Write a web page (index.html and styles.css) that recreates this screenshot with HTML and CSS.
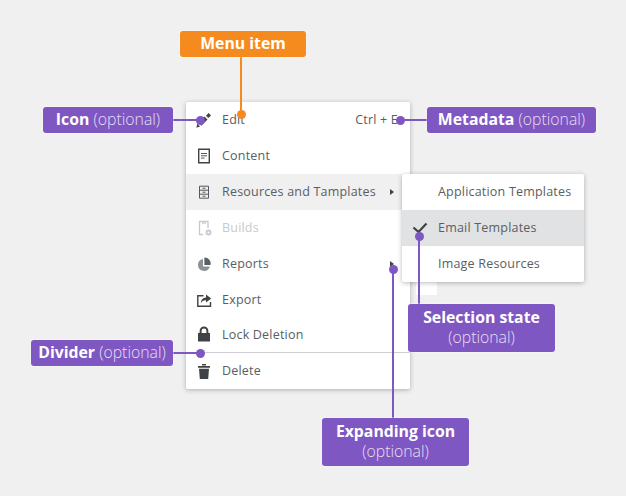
FILE: index.html
```html
<!DOCTYPE html>
<html lang="en">
<head>
<meta charset="utf-8">
<title>Menu anatomy</title>
<link rel="stylesheet" href="styles.css">
</head>
<body>
<main class="stage">
  <div class="patch"></div>
  <nav class="menu main-menu">
    <div class="row">
      <svg class="icon" viewBox="0 0 16 16"><path class="ink" d="M.3 15.700l1-3.900 2.800 2.800z"/><path class="ink" d="M2.200 10.800l6.300-6.300 3 3-6.300 6.300z"/><path class="ink" d="M10 3.800l1.700-1.700 1-1 2.300 2.300-1 1-1.700 1.700z"/></svg>
      <span class="label">Edit</span><span class="meta">Ctrl + E</span>
    </div>
    <div class="row">
      <svg class="icon" viewBox="0 0 16 16"><path class="line" d="M2.700 1.200h10.600v13.600H2.700z"/><path class="thin" d="M5 5.500h6M5 7.800h6M5 10.100h3.500"/></svg>
      <span class="label">Content</span>
    </div>
    <div class="row hover">
      <svg class="icon" viewBox="0 0 16 16"><path class="thin" d="M3.500 2.200h9v12h-9zM3.500 6.200h9M3.500 10.200h9M6.500 4.200h3M6.500 8.200h3M6.500 12.200h3"/></svg>
      <span class="label">Resources and Tamplates</span><span class="caret"></span>
    </div>
    <div class="row disabled">
      <svg class="icon" viewBox="0 0 16 16"><path class="faint" d="M7 14.500H3.500V1.500h8.500V8"/><path class="faint" d="M6 3h4"/><circle class="faint-fill" cx="12.500" cy="12.500" r="3"/><circle cx="12.500" cy="12.500" r="1.100" fill="#fff"/></svg>
      <span class="label">Builds</span>
    </div>
    <div class="row">
      <svg class="icon" viewBox="0 0 16 16"><path fill="#8e9193" d="M7 3a6 6 0 1 0 6.800 7.500H7z"/><path fill="#5b5f62" d="M8.400 1.500a6 6 0 0 1 6.100 7.500H8.400z"/></svg>
      <span class="label">Reports</span><span class="caret"></span>
    </div>
    <div class="row">
      <svg class="icon" viewBox="0 0 16 16"><path class="line" d="M7.500 3.800H1.800v10.400h12.700V10"/><path class="ink" d="M10 2.500l5.200 4-5.200 4V8.300C7.500 8.200 5.800 9.300 4.800 11.500c0-3.500 1.800-5.700 5.200-6z"/></svg>
      <span class="label">Export</span>
    </div>
    <div class="row lock-row">
      <svg class="icon" viewBox="0 0 16 16"><path class="ink" d="M2 7h12v8.500H2z"/><path class="bold-line" d="M4.600 7.500V4.800a3.400 3.400 0 0 1 6.800 0v2.700"/></svg>
      <span class="label">Lock Deletion</span>
    </div>
    <div class="row">
      <svg class="icon" viewBox="0 0 16 16"><path class="ink" d="M2 3h12v1.700H2zM6 1h4v1.500H6zM3 5.700h10l-.8 10.300H3.800z"/></svg>
      <span class="label">Delete</span>
    </div>
  </nav>
  <nav class="menu sub-menu">
    <div class="row sub-row"><span class="tick"></span><span class="label">Application Templates</span></div>
    <div class="row sub-row selected">
      <span class="tick"><svg class="check" viewBox="0 0 16 12"><path d="M1.500 5.500l5 4.500 8-8.500"/></svg></span>
      <span class="label">Email Templates</span>
    </div>
    <div class="row sub-row"><span class="tick"></span><span class="label">Image Resources</span></div>
  </nav>

  <div class="wire wire-menu"></div>
  <div class="wire wire-icon"></div>
  <div class="wire wire-meta"></div>
  <div class="wire wire-divider"></div>
  <div class="wire wire-select"></div>
  <div class="wire wire-expand"></div>

  <span class="dot dot-menu"></span>
  <span class="dot dot-icon"></span>
  <span class="dot dot-meta"></span>
  <span class="dot dot-divider"></span>
  <span class="dot dot-select"></span>
  <span class="dot dot-expand"></span>

  <div class="tag tag-menu"><b>Menu item</b></div>
  <div class="tag tag-icon"><b>Icon</b> (optional)</div>
  <div class="tag tag-meta"><b>Metadata</b> (optional)</div>
  <div class="tag tag-divider"><b>Divider</b> (optional)</div>
  <div class="tag tag-select"><b>Selection state</b><span>(optional)</span></div>
  <div class="tag tag-expand"><b>Expanding icon</b><span>(optional)</span></div>
</main>
</body>
</html>
```
FILE: styles.css
```css
* { box-sizing: border-box; }
html, body { margin: 0; }
body {
  background: #f0f0f0;
  font-family: "Open Sans", "Noto Sans", sans-serif;
  color: #5a5e61;
}
.stage { position: relative; width: 626px; height: 496px; overflow: hidden; }
.patch { position: absolute; left: 416px; top: 270px; width: 21px; height: 25px; background: #fff; }
.menu {
  position: absolute;
  background: #fff;
  border-radius: 2px;
  box-shadow: 0 1px 5px rgba(0, 0, 0, .28);
  display: flex;
  flex-direction: column;
}
.main-menu { left: 186px; top: 102px; width: 224px; height: 287px; }
.sub-menu { left: 402px; top: 174px; width: 182px; height: 108px; }
.row {
  height: 36px;
  flex: none;
  display: flex;
  align-items: center;
  padding: 0 13px 1px 10px;
  font-size: 12.5px;
  letter-spacing: .2px;
  white-space: nowrap;
}
.icon { width: 16px; height: 16px; flex: none; margin-right: 10px; }
.label { flex: 1; }
.meta { margin-right: -1px; }
.hover { background: #f0f0f0; }
.selected { background: #e1e2e3; }
.disabled { color: #c8cacb; }
.lock-row { height: 35px; border-bottom: 1px solid #cfcdd3; padding-bottom: 2px; }
.caret {
  width: 0; height: 0;
  margin-right: 3px;
  border-left: 4px solid #3f4346;
  border-top: 3px solid transparent;
  border-bottom: 3px solid transparent;
}
.sub-row { padding-left: 10px; padding-right: 8px; }
.tick { width: 26px; flex: none; display: flex; }
.check { width: 16px; height: 12px; margin-top: 1px; fill: none; stroke: #3f4346; stroke-width: 2.2; }
.ink { fill: #3f4346; }
.line { fill: none; stroke: #3f4346; stroke-width: 1.400; }
.thin { fill: none; stroke: #55595c; stroke-width: 1; }
.bold-line { fill: none; stroke: #3f4346; stroke-width: 2; }
.faint { fill: none; stroke: #c8cacb; stroke-width: 1.300; }
.faint-fill { fill: #c8cacb; }

.wire { position: absolute; }
.wire-menu { left: 240px; top: 57px; width: 2px; height: 57px; background: #f58a1f; }
.wire-icon { left: 173px; top: 119px; width: 27px; height: 2px; background: #7f57c2; }
.wire-meta { left: 400px; top: 119px; width: 27px; height: 2px; background: #7f57c2; }
.wire-divider { left: 173px; top: 352px; width: 27px; height: 2px; background: #7f57c2; }
.wire-select { left: 418px; top: 236px; width: 2px; height: 68px; background: #7f57c2; }
.wire-expand { left: 392px; top: 269px; width: 2px; height: 149px; background: #7f57c2; }

.dot { position: absolute; width: 9px; height: 9px; border-radius: 50%; background: #7f57c2; }
.dot-menu { left: 236.500px; top: 109.500px; background: #f58a1f; }
.dot-icon { left: 196px; top: 115.500px; }
.dot-meta { left: 396px; top: 115.500px; }
.dot-divider { left: 196px; top: 348.500px; }
.dot-select { left: 414.500px; top: 231.500px; }
.dot-expand { left: 388.500px; top: 264.500px; }

.tag {
  position: absolute;
  background: #7f57c2;
  color: #e6dff3;
  border-radius: 3px;
  box-shadow: 0 0 0 1px rgba(255, 255, 255, .3);
  display: flex;
  flex-direction: column;
  align-items: center;
  justify-content: center;
  font-size: 15.8px;
  line-height: 20px;
  white-space: pre;
  font-weight: 300;
}
.tag b { font-weight: 700; color: #fff; }
.tag-menu, .tag-icon, .tag-meta, .tag-divider { flex-direction: row; height: 26px; padding-bottom: 2px; }
.tag-select, .tag-expand { padding-bottom: 3px; }
.tag-menu { left: 180px; top: 31px; width: 126px; background: #f58a1f; }
.tag-icon { left: 43px; top: 107px; width: 130px; }
.tag-meta { left: 427px; top: 107px; width: 169px; }
.tag-divider { left: 31px; top: 340px; width: 142px; }
.tag-select { left: 408px; top: 304px; width: 147px; height: 48px; }
.tag-expand { left: 322px; top: 418px; width: 147px; height: 48px; }
```
